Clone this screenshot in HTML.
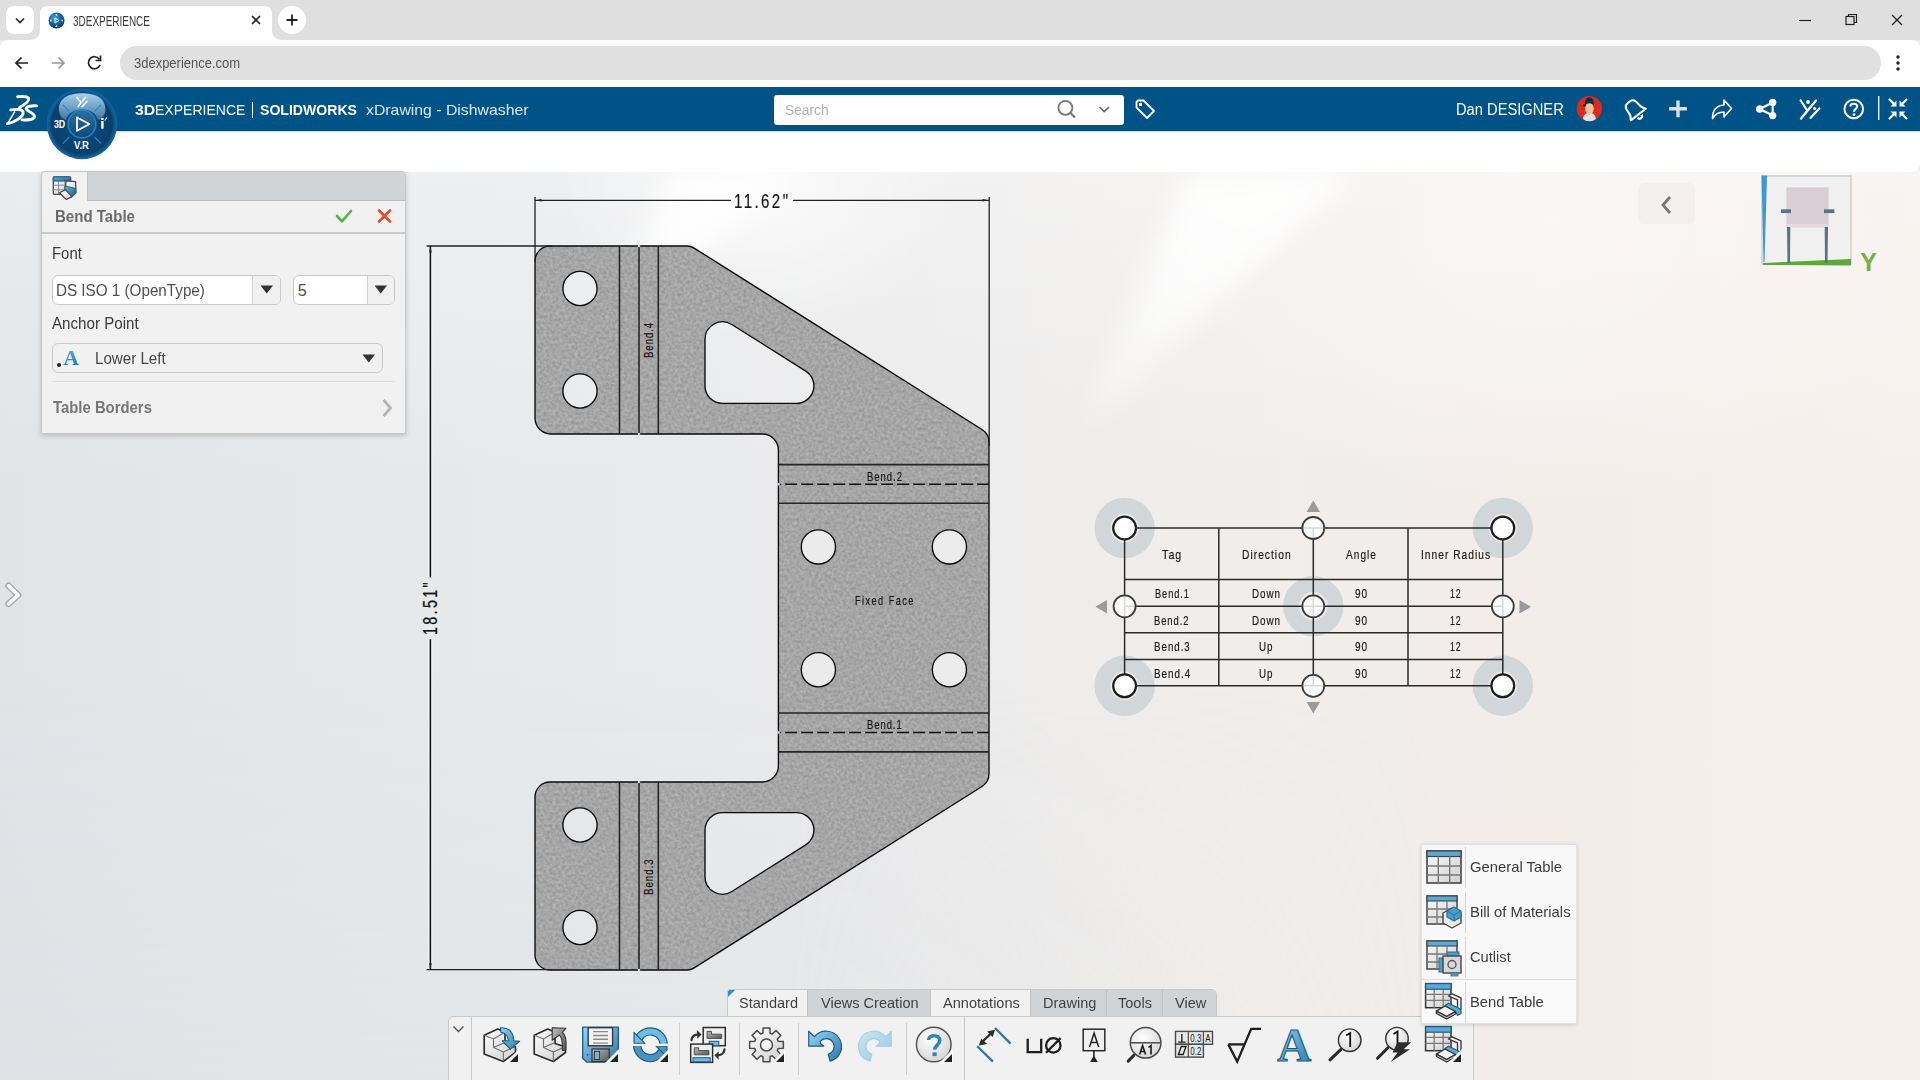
<!DOCTYPE html>
<html><head><meta charset="utf-8">
<style>
*{margin:0;padding:0;box-sizing:border-box}
html,body{width:1920px;height:1080px;overflow:hidden;font-family:"Liberation Sans", sans-serif;}
body{position:relative;background:#ececec}
.abs{position:absolute}
</style></head><body>

<div class="abs" style="left:0;top:170px;width:1920px;height:910px;overflow:hidden;background:linear-gradient(90deg,#e1e4e7 0%,#e6e8ea 20%,#ebebec 45%,#f0eeec 62%,#f3edea 82%,#f7efec 100%);">
 <div class="abs" style="left:0;top:0;width:1920px;height:910px;background:linear-gradient(180deg,rgba(255,255,255,0.3) 0%,rgba(255,255,255,0) 35%)"></div>
 <div class="abs" style="left:0;top:0;width:1920px;height:910px;background:linear-gradient(180deg,rgba(220,223,226,0) 55%,rgba(220,223,226,0.3) 100%);-webkit-mask-image:linear-gradient(90deg,#000 0%,#000 40%,transparent 75%)"></div>
 <div class="abs" style="left:0;top:0;width:1920px;height:600px;filter:blur(14px)">
  <div class="abs" style="left:0;top:0;width:1920px;height:600px;clip-path:polygon(685px -30px, 820px -30px, 595px 195px);background:linear-gradient(205deg,rgba(255,255,255,1) 15%,rgba(255,255,255,0.9) 40%,rgba(255,255,255,0) 80%)"></div>
  <div class="abs" style="left:0;top:0;width:1920px;height:600px;clip-path:polygon(1200px -30px, 1390px -30px, 1080px 265px);background:linear-gradient(210deg,rgba(255,255,255,1) 8%,rgba(255,255,255,0.85) 28%,rgba(255,255,255,0) 52%)"></div>
 </div>
 <div class="abs" style="left:560px;top:-150px;width:400px;height:320px;background:radial-gradient(closest-side,rgba(255,255,255,0.75),rgba(255,255,255,0) 100%)"></div>
 <div class="abs" style="left:1150px;top:-250px;width:800px;height:600px;background:radial-gradient(closest-side,rgba(255,255,255,0.4),rgba(255,255,255,0) 100%)"></div>
</div>

<div class="abs" style="left:0;top:0;width:1920px;height:40px;background:#dfdfdf"></div><div class="abs" style="left:6px;top:6px;width:28px;height:28px;border-radius:8px;background:#fff"></div><svg class="abs" style="left:6px;top:6px" width="28" height="28"><path d="M10 12.5 l4 4 l4 -4" fill="none" stroke="#222" stroke-width="1.6"/></svg><svg class="abs" style="left:28px;top:0" width="256" height="40"><path d="M0 40 Q12 40 12 30 L12 14 Q12 6 20 6 L236 6 Q244 6 244 14 L244 30 Q244 40 256 40 Z" fill="#fff"/></svg><svg class="abs" style="left:48px;top:12px" width="17" height="17" viewBox="0 0 17 17"><defs><radialGradient id="fav" cx="0.4" cy="0.35" r="0.7"><stop offset="0" stop-color="#4aa6e0"/><stop offset="0.6" stop-color="#0b5c9c"/><stop offset="1" stop-color="#063b66"/></radialGradient></defs><circle cx="8.5" cy="8.5" r="8" fill="url(#fav)"/><path d="M7 6 l4 2.5 l-4 2.5 z" fill="none" stroke="#fff" stroke-width="1"/><circle cx="8.5" cy="2.8" r="0.9" fill="#fff"/><circle cx="8.5" cy="14.2" r="0.9" fill="#fff"/><circle cx="2.8" cy="8.5" r="0.9" fill="#fff"/><circle cx="14.2" cy="8.5" r="0.9" fill="#fff"/></svg><div class="abs" style="left:73.00px;top:13.74px;font-size:14.24px;line-height:14.24px;color:#3c3c3c;white-space:nowrap;transform:scaleX(0.6998);transform-origin:0 0;letter-spacing:0.00px;">3DEXPERIENCE</div><svg class="abs" style="left:248px;top:12px" width="16" height="16"><path d="M4 4 L12 12 M12 4 L4 12" stroke="#222" stroke-width="1.6"/></svg><div class="abs" style="left:278px;top:6px;width:28px;height:28px;border-radius:14px;background:#fff"></div><svg class="abs" style="left:278px;top:6px" width="28" height="28"><path d="M14 8.5 V19.5 M8.5 14 H19.5" stroke="#222" stroke-width="1.8"/></svg><svg class="abs" style="left:1790px;top:8px" width="125" height="24"><path d="M9 12.5 H21" stroke="#222" stroke-width="1.2"/><rect x="56" y="8.5" width="8" height="8" fill="none" stroke="#222" stroke-width="1.2"/><path d="M58.5 8.5 V6.5 H66.5 V14.5 H64" fill="none" stroke="#222" stroke-width="1.2"/><path d="M102 7 L112 17 M112 7 L102 17" stroke="#222" stroke-width="1.3"/></svg><div class="abs" style="left:0;top:40px;width:1920px;height:47px;background:#fff;border-radius:8px 8px 0 0"></div><svg class="abs" style="left:0;top:46px" width="120" height="34"><path d="M28 17 H16 M21.5 11.5 L16 17 L21.5 22.5" fill="none" stroke="#222" stroke-width="1.7"/><path d="M52 17 H64 M58.5 11.5 L64 17 L58.5 22.5" fill="none" stroke="#9a9a9a" stroke-width="1.7"/><path d="M99.5 13.5 A6 6 0 1 0 100 19" fill="none" stroke="#222" stroke-width="1.7"/><path d="M100.5 9.5 V14.5 H95.5" fill="none" stroke="#222" stroke-width="1.7"/></svg><div class="abs" style="left:120px;top:46px;width:1761px;height:34px;border-radius:17px;background:#e0e0e0"></div><div class="abs" style="left:134.00px;top:56.05px;font-size:14.83px;line-height:14.83px;color:#555;white-space:nowrap;transform:scaleX(0.8750);transform-origin:0 0;letter-spacing:0.00px;">3dexperience.com</div><svg class="abs" style="left:1890px;top:50px" width="16" height="26"><circle cx="8" cy="7" r="1.7" fill="#222"/><circle cx="8" cy="13" r="1.7" fill="#222"/><circle cx="8" cy="19" r="1.7" fill="#222"/></svg><div class="abs" style="left:0;top:87px;width:1920px;height:44px;background:#005386;border-bottom:1px solid #004a7a"></div><div class="abs" style="left:0;top:131px;width:1920px;height:40.5px;background:#fff;border-radius:0 0 8px 0"></div><div class="abs" style="left:0;top:131px;width:1920px;height:2px;background:linear-gradient(180deg,rgba(0,80,130,0.25),rgba(0,80,130,0))"></div><svg class="abs" style="left:0;top:88px" width="50" height="42" viewBox="0 88 50 42">
<g fill="none" stroke="#fff" stroke-linecap="round" stroke-linejoin="round">
<path d="M17.6 96.7 C22 96.4 27 95.8 28.6 98.3 C29.8 100.8 24.5 104.5 19.6 107.6" stroke-width="2.9"/>
<path d="M10.8 109.9 C15 109.2 21.8 108.2 23 111.8 C24 116.5 15.5 122 7.5 123.6" stroke-width="2.9"/>
<path d="M7.5 123.6 L14.6 111.9" stroke-width="1.6"/>
<path d="M36.8 105.9 C32 105.6 26.2 106.2 26.2 108.6 C26.4 111.3 34.6 113.2 34.6 116.6 C34.6 119.6 27.5 120.2 22 119.9" stroke-width="2.9"/>
</g>
</svg><div class="abs" style="left:134.75px;top:102.18px;font-size:15.55px;line-height:15.55px;color:#fff;font-weight:bold;white-space:nowrap;transform:scaleX(1.0160);transform-origin:0 0;letter-spacing:0.00px;">3D</div><div class="abs" style="left:155.20px;top:102.18px;font-size:15.55px;line-height:15.55px;color:#fff;white-space:nowrap;transform:scaleX(0.9017);transform-origin:0 0;letter-spacing:0.00px;">EXPERIENCE</div><div class="abs" style="left:252px;top:101.5px;width:1.3px;height:16px;background:#fff"></div><div class="abs" style="left:260.00px;top:102.18px;font-size:15.55px;line-height:15.55px;color:#fff;font-weight:bold;white-space:nowrap;transform:scaleX(0.9054);transform-origin:0 0;letter-spacing:0.00px;">SOLIDWORKS</div><div class="abs" style="left:365.70px;top:102.18px;font-size:15.55px;line-height:15.55px;color:#dce8f0;white-space:nowrap;transform:scaleX(1.0169);transform-origin:0 0;letter-spacing:0.00px;">xDrawing - Dishwasher</div><svg class="abs" style="left:46px;top:87px" width="72" height="74" viewBox="0 0 72 74">
<defs>
<radialGradient id="cmpb" cx="0.5" cy="0.5" r="0.5"><stop offset="0" stop-color="#0d4e80"/><stop offset="0.86" stop-color="#0a3f6c"/><stop offset="0.93" stop-color="#0f5890"/><stop offset="1" stop-color="#1766a0"/></radialGradient>
<linearGradient id="cmpt" x1="0" y1="0" x2="0" y2="1"><stop offset="0" stop-color="#a6d0ee"/><stop offset="1" stop-color="#3f76a2"/></linearGradient>
<linearGradient id="cmpc" x1="0" y1="0" x2="0" y2="1"><stop offset="0" stop-color="#2f6e9e"/><stop offset="1" stop-color="#0a4a7c"/></linearGradient>
</defs>
<circle cx="36" cy="37" r="35.2" fill="url(#cmpb)"/>
<path d="M12.9 22 C12.9 11 23 6.2 36.2 6.2 C49.5 6.2 59.4 11 59.4 22 C59.4 28 56 31.5 52 33 C50 26 44 22.5 36 22.5 C28 22.5 22 26 20 33 C16 31.5 12.9 28 12.9 22 Z" fill="url(#cmpt)"/>
<path d="M16.7 17.7 L23.3 24.3 M55.3 17.7 L48.7 24.3 M16.7 56.6 L23.3 50 M55.3 56.6 L48.7 50" stroke="#1e8ad0" stroke-width="1.2"/>
<circle cx="36" cy="37" r="13.9" fill="url(#cmpc)" stroke="#1a88d0" stroke-width="1.5"/>
<path d="M31 30.5 L43.4 37 L31 43.8 Z" fill="none" stroke="#fff" stroke-width="1.8" stroke-linejoin="round"/>
<text x="13.6" y="40.9" font-size="11" font-weight="bold" fill="#fff" text-anchor="middle" font-family="Liberation Sans" transform="translate(13.6 0) scale(0.8 1) translate(-13.6 0)">3D</text>
<rect x="55.2" y="34" width="2.4" height="7.7" fill="#fff"/><rect x="55.2" y="31" width="2.4" height="2" fill="#fff"/>
<path d="M58.8 33.5 L60.9 30.5" stroke="#fff" stroke-width="1.3"/>
<g fill="none" stroke="#fff" stroke-width="1.7" stroke-linecap="round"><path d="M31 10.5 L35 15.5 L32.3 19.6 M36.5 14 L39.6 10.2 M36.2 19.6 L41 14.3"/></g>
<text x="35.5" y="62.2" font-size="11.2" font-weight="bold" fill="#fff" text-anchor="middle" font-family="Liberation Sans" transform="translate(35.5 0) scale(0.85 1) translate(-35.5 0)">V.R</text>
</svg><div class="abs" style="left:774px;top:94.5px;width:350px;height:30px;border-radius:3px;background:#fff"></div><div class="abs" style="left:785.20px;top:102.43px;font-size:15.55px;line-height:15.55px;color:#b0b0b0;white-space:nowrap;transform:scaleX(0.8848);transform-origin:0 0;letter-spacing:0.00px;">Search</div><svg class="abs" style="left:1050px;top:95px" width="70" height="30"><circle cx="15.4" cy="12.8" r="7" fill="none" stroke="#777" stroke-width="1.8"/><path d="M20.5 18 L25 22.5" stroke="#777" stroke-width="2.2"/><path d="M49.5 12 L54.2 16.5 L59 12" fill="none" stroke="#666" stroke-width="1.7"/></svg><svg class="abs" style="left:1133px;top:97px" width="26" height="26"><path d="M3.5 5 L3.5 10.5 L14 21 L21 14 L10.5 3.5 L5 3.5 Z" fill="none" stroke="#fff" stroke-width="1.8" stroke-linejoin="round"/><rect x="6" y="6" width="3" height="3" fill="#fff"/></svg><div class="abs" style="left:1456.00px;top:102.17px;font-size:15.63px;line-height:15.63px;color:#fff;white-space:nowrap;transform:scaleX(0.9401);transform-origin:0 0;letter-spacing:0.00px;">Dan DESIGNER</div><svg class="abs" style="left:1576px;top:95px" width="27" height="27" viewBox="0 0 27 27"><circle cx="13.4" cy="13.5" r="12.6" fill="#dc2a1e"/>
<ellipse cx="13.4" cy="13.6" rx="4.3" ry="6" fill="#eec39b"/>
<path d="M9 11 C8.5 6 10 2.3 13.4 2.3 C16.8 2.3 18.3 6 17.8 11 C16.5 9 15 8.3 13.4 8.3 C11.8 8.3 10.3 9 9 11 Z" fill="#0d2f4d"/>
<circle cx="8.3" cy="10.2" r="1.3" fill="#111"/>
<path d="M7 24 C7.2 20 9.5 18.5 12 18 L13.4 20 L14.8 18 C17.3 18.5 19.6 20 19.8 24 C18 25.6 15.8 26.2 13.4 26.2 C11 26.2 8.8 25.6 7 24 Z" fill="#e2e4e6"/>
</svg><svg class="abs" style="left:1600px;top:90px" width="320" height="40" viewBox="0 0 320 40">
<g transform="translate(34,19) rotate(-38)" fill="none" stroke="#fff" stroke-width="2" stroke-linejoin="round">
<path d="M-1.5 -8.5 C-5.5 -8.5 -6.5 -5 -6.5 -1 C-6.5 3 -7.5 5 -9.5 7 L9.5 7 C7.5 5 6.5 3 6.5 -1 C6.5 -5 5.5 -8.5 1.5 -8.5 Z"/>
<path d="M-2.5 9 A2.5 2.5 0 0 0 2.5 9" stroke-width="2.2"/>
</g>
<path d="M78 10.4 V27.2 M69.2 18.8 H86.9" stroke="#dedede" stroke-width="3.4"/>
<path d="M112.5 28.5 C112.5 20 117 15.5 124 15 V10 L131.5 18.5 L124 27 V22 C119 22 115 24 112.5 28.5 Z" fill="none" stroke="#fff" stroke-width="1.6" stroke-linejoin="round"/>
<g stroke="#fff" stroke-width="2.2"><path d="M159.7 19 L172.7 12.4 M159.7 19 L172.7 25.6 M172.7 12.4 V25.6"/></g>
<g fill="#fff"><circle cx="159.7" cy="19" r="3.7"/><circle cx="172.7" cy="12.4" r="3.6"/><circle cx="172.7" cy="25.6" r="3.6"/></g>
<g fill="none" stroke="#fff" stroke-width="2.3" stroke-linecap="round">
<path d="M200.7 10.5 L206.5 19.5 M216 10.5 L201 28.5"/>
<path d="M210.5 28 L219.3 18.5"/>
</g>
<circle cx="208" cy="12" r="1.9" fill="#fff"/><circle cx="214.6" cy="18.6" r="1.5" fill="#fff"/>
<circle cx="253.75" cy="19" r="9.3" fill="none" stroke="#fff" stroke-width="2"/>
<path d="M250.3 16.5 C250.3 12.8 257.3 12.8 257.3 16.3 C257.3 18.8 254 19 254 21.8" fill="none" stroke="#fff" stroke-width="2.1"/><circle cx="254" cy="24.6" r="1.4" fill="#fff"/>
<path d="M278.75 6 V30" stroke="#fff" stroke-width="1.3"/>
<g fill="none" stroke="#fff" stroke-width="2.2">
<path d="M289 9 L295 15 M307 9 L301 15 M289 29 L295 23 M307 29 L301 23"/>
</g>
<g fill="#fff"><path d="M296.5 16.5 L290.5 16.5 L296.5 10.5 Z"/><path d="M299.5 16.5 L305.5 16.5 L299.5 10.5 Z"/><path d="M296.5 21.5 L290.5 21.5 L296.5 27.5 Z"/><path d="M299.5 21.5 L305.5 21.5 L299.5 27.5 Z"/></g>
</svg>

<svg class="abs" style="left:0;top:0" width="1920" height="1080" viewBox="0 0 1920 1080">
 <defs>
  <filter id="noise" x="0" y="0" width="100%" height="100%" color-interpolation-filters="sRGB">
   <feTurbulence type="fractalNoise" baseFrequency="0.32" numOctaves="3" seed="7" result="t"/>
   <feColorMatrix type="matrix" in="t" result="n" values="1 0 0 0 0  1 0 0 0 0  1 0 0 0 0  0 0 0 0 0.2"/>
   <feComposite in="n" in2="SourceGraphic" operator="in" result="nn"/>
   <feMerge><feMergeNode in="SourceGraphic"/><feMergeNode in="nn"/></feMerge>
  </filter>
 </defs>
 <path d="M550 246 L687.33 246 A12 12 0 0 1 693.73 247.85 L982 429.49 A15 15 0 0 1 989 442.18 L989 773.82 A15 15 0 0 1 982 786.51 L693.73 968.15 A12 12 0 0 1 687.33 970 L550 970 A15 15 0 0 1 535 955 L535 797 A15 15 0 0 1 550 782 L762.4 782 A16 16 0 0 0 778.4 766 L778.4 450 A16 16 0 0 0 762.4 434 L551 434 A16 16 0 0 1 535 418 L535 261 A15 15 0 0 1 550 246 Z M731.83 324.51 L805.74 371.1 A17.5 17.5 0 0 1 796.41 403.4 L722.5 403.4 A17.5 17.5 0 0 1 705 385.9 L705 339.32 A17.5 17.5 0 0 1 731.83 324.51 Z M722.5 812.6 L796.41 812.6 A17.5 17.5 0 0 1 805.74 844.9 L731.83 891.49 A17.5 17.5 0 0 1 705 876.68 L705 830.1 A17.5 17.5 0 0 1 722.5 812.6 Z M562.90 288.50 a17.10 17.10 0 1 0 34.20 0 a17.10 17.10 0 1 0 -34.20 0 Z M562.90 391.00 a17.10 17.10 0 1 0 34.20 0 a17.10 17.10 0 1 0 -34.20 0 Z M562.90 825.00 a17.10 17.10 0 1 0 34.20 0 a17.10 17.10 0 1 0 -34.20 0 Z M562.90 927.50 a17.10 17.10 0 1 0 34.20 0 a17.10 17.10 0 1 0 -34.20 0 Z M801.30 546.90 a17.10 17.10 0 1 0 34.20 0 a17.10 17.10 0 1 0 -34.20 0 Z M932.30 546.90 a17.10 17.10 0 1 0 34.20 0 a17.10 17.10 0 1 0 -34.20 0 Z M801.30 669.70 a17.10 17.10 0 1 0 34.20 0 a17.10 17.10 0 1 0 -34.20 0 Z M932.30 669.70 a17.10 17.10 0 1 0 34.20 0 a17.10 17.10 0 1 0 -34.20 0 Z" fill="#afafaf" fill-rule="evenodd" filter="url(#noise)"/>
 <path d="M550 246 L687.33 246 A12 12 0 0 1 693.73 247.85 L982 429.49 A15 15 0 0 1 989 442.18 L989 773.82 A15 15 0 0 1 982 786.51 L693.73 968.15 A12 12 0 0 1 687.33 970 L550 970 A15 15 0 0 1 535 955 L535 797 A15 15 0 0 1 550 782 L762.4 782 A16 16 0 0 0 778.4 766 L778.4 450 A16 16 0 0 0 762.4 434 L551 434 A16 16 0 0 1 535 418 L535 261 A15 15 0 0 1 550 246 Z M731.83 324.51 L805.74 371.1 A17.5 17.5 0 0 1 796.41 403.4 L722.5 403.4 A17.5 17.5 0 0 1 705 385.9 L705 339.32 A17.5 17.5 0 0 1 731.83 324.51 Z M722.5 812.6 L796.41 812.6 A17.5 17.5 0 0 1 805.74 844.9 L731.83 891.49 A17.5 17.5 0 0 1 705 876.68 L705 830.1 A17.5 17.5 0 0 1 722.5 812.6 Z M562.90 288.50 a17.10 17.10 0 1 0 34.20 0 a17.10 17.10 0 1 0 -34.20 0 Z M562.90 391.00 a17.10 17.10 0 1 0 34.20 0 a17.10 17.10 0 1 0 -34.20 0 Z M562.90 825.00 a17.10 17.10 0 1 0 34.20 0 a17.10 17.10 0 1 0 -34.20 0 Z M562.90 927.50 a17.10 17.10 0 1 0 34.20 0 a17.10 17.10 0 1 0 -34.20 0 Z M801.30 546.90 a17.10 17.10 0 1 0 34.20 0 a17.10 17.10 0 1 0 -34.20 0 Z M932.30 546.90 a17.10 17.10 0 1 0 34.20 0 a17.10 17.10 0 1 0 -34.20 0 Z M801.30 669.70 a17.10 17.10 0 1 0 34.20 0 a17.10 17.10 0 1 0 -34.20 0 Z M932.30 669.70 a17.10 17.10 0 1 0 34.20 0 a17.10 17.10 0 1 0 -34.20 0 Z" fill="none" stroke="#0a0a0a" stroke-width="1.35"/>
 <g stroke="#262626" stroke-width="1.6">
  <line x1="619.5" y1="246" x2="619.5" y2="434"/><line x1="639" y1="246" x2="639" y2="434"/><line x1="658.3" y1="246" x2="658.3" y2="434"/>
  <line x1="619.5" y1="782" x2="619.5" y2="970"/><line x1="639" y1="782" x2="639" y2="970"/><line x1="658.3" y1="782" x2="658.3" y2="970"/>
  <line x1="778.4" y1="464.6" x2="989" y2="464.6"/><line x1="778.4" y1="503.3" x2="989" y2="503.3"/>
  <line x1="778.4" y1="713" x2="989" y2="713"/><line x1="778.4" y1="751.9" x2="989" y2="751.9"/>
 </g>
 <g stroke="#111" stroke-width="1.5" stroke-dasharray="12 4">
  <line x1="785.1" y1="484.3" x2="989" y2="484.3"/><line x1="785.1" y1="732.4" x2="989" y2="732.4"/>
 </g>
 <g fill="#111"><rect x="779.9" y="483.6" width="1.2" height="1.5"/><rect x="779.9" y="731.7" width="1.2" height="1.5"/></g>
 <g fill="#c9d3d8"><circle cx="639" cy="246" r="1.3"/><circle cx="639" cy="434" r="1.3"/><circle cx="639" cy="782" r="1.3"/><circle cx="639" cy="970" r="1.3"/><circle cx="778.4" cy="484.3" r="1.3"/><circle cx="778.4" cy="732.4" r="1.3"/></g>
 <!-- dimensions -->
 <g stroke="#202020" stroke-width="1.3" fill="none">
  <line x1="535" y1="197" x2="535" y2="262"/><line x1="989.2" y1="197" x2="989.2" y2="446"/>
  <line x1="535" y1="200.3" x2="731" y2="200.3"/><line x1="793.1" y1="200.3" x2="989" y2="200.3"/>
  <line x1="426.6" y1="246" x2="552" y2="246"/><line x1="426.6" y1="969.7" x2="552" y2="969.7"/>
 </g>
 <g stroke="#fff" stroke-width="3.6" opacity="0.8">
  <line x1="430.4" y1="250" x2="430.4" y2="577.4"/><line x1="430.4" y1="639.3" x2="430.4" y2="966"/>
 </g>
 <g stroke="#111" stroke-width="1.6">
  <line x1="430.4" y1="246" x2="430.4" y2="577.4"/><line x1="430.4" y1="639.3" x2="430.4" y2="969.7"/>
 </g>
 <g fill="#202020">
  <path d="M535.5 200.3 l6 -1.3 v2.6 z"/><path d="M988.5 200.3 l-6 -1.3 v2.6 z"/>
  <path d="M430.4 246.5 l-1.3 6 h2.6 z"/><path d="M430.4 969.2 l-1.3 -6 h2.6 z"/>
 </g>
</svg>
<div class="abs" style="left:734.00px;top:192.41px;font-size:19.48px;line-height:19.48px;color:#151515;white-space:nowrap;letter-spacing:3.12px;-webkit-text-stroke:0.2px #151515;transform:scaleX(0.7737);transform-origin:0 0">11.62"</div>
<div class="abs" style="left:421.27px;top:635.20px;font-size:19.77px;line-height:19.77px;color:#151515;white-space:nowrap;letter-spacing:3.16px;-webkit-text-stroke:0.2px #151515;transform:rotate(-90deg) scaleX(0.7275);transform-origin:0 0">18.51"</div>
<div class="abs" style="left:866.60px;top:470.20px;font-size:13.23px;line-height:13.23px;color:#151515;white-space:nowrap;letter-spacing:1.32px;-webkit-text-stroke:0.2px #151515;transform:scaleX(0.7211);transform-origin:0 0">Bend.2</div>
<div class="abs" style="left:867.00px;top:718.30px;font-size:13.23px;line-height:13.23px;color:#151515;white-space:nowrap;letter-spacing:1.32px;-webkit-text-stroke:0.2px #151515;transform:scaleX(0.7149);transform-origin:0 0">Bend.1</div>
<div class="abs" style="left:854.80px;top:594.85px;font-size:12.94px;line-height:12.94px;color:#151515;white-space:nowrap;letter-spacing:2.07px;-webkit-text-stroke:0.2px #151515;transform:scaleX(0.7057);transform-origin:0 0">Fixed Face</div>
<div class="abs" style="left:641.80px;top:358.00px;font-size:13.23px;line-height:13.23px;color:#151515;white-space:nowrap;letter-spacing:1.32px;-webkit-text-stroke:0.2px #151515;transform:rotate(-90deg) scaleX(0.7252);transform-origin:0 0">Bend.4</div>
<div class="abs" style="left:641.90px;top:894.50px;font-size:13.23px;line-height:13.23px;color:#151515;white-space:nowrap;letter-spacing:1.32px;-webkit-text-stroke:0.2px #151515;transform:rotate(-90deg) scaleX(0.7376);transform-origin:0 0">Bend.3</div>


<svg class="abs" style="left:0;top:0" width="1920" height="1080" viewBox="0 0 1920 1080">
 <circle cx="1124.6" cy="528" r="30.2" fill="#d3d6d8"/><circle cx="1124.6" cy="528" r="14.2" fill="#eceaea"/><circle cx="1502.8" cy="528" r="30.2" fill="#d3d6d8"/><circle cx="1502.8" cy="528" r="14.2" fill="#eceaea"/><circle cx="1124.6" cy="685.8" r="30.2" fill="#d3d6d8"/><circle cx="1124.6" cy="685.8" r="14.2" fill="#eceaea"/><circle cx="1502.8" cy="685.8" r="30.2" fill="#d3d6d8"/><circle cx="1502.8" cy="685.8" r="14.2" fill="#eceaea"/><circle cx="1313.3" cy="606.3" r="30.2" fill="#d3d6d8"/><circle cx="1313.3" cy="606.3" r="14.2" fill="#eceaea"/>
 <g stroke="#2a2a2a" stroke-width="1.5"><line x1="1124.6" y1="528" x2="1124.6" y2="685.8"/><line x1="1218.8" y1="528" x2="1218.8" y2="685.8"/><line x1="1313.3" y1="528" x2="1313.3" y2="685.8"/><line x1="1408" y1="528" x2="1408" y2="685.8"/><line x1="1502.8" y1="528" x2="1502.8" y2="685.8"/><line x1="1124.6" y1="528" x2="1502.8" y2="528"/><line x1="1124.6" y1="579.4" x2="1502.8" y2="579.4"/><line x1="1124.6" y1="606.3" x2="1502.8" y2="606.3"/><line x1="1124.6" y1="632.7" x2="1502.8" y2="632.7"/><line x1="1124.6" y1="659.4" x2="1502.8" y2="659.4"/><line x1="1124.6" y1="685.8" x2="1502.8" y2="685.8"/></g>
 <circle cx="1124.6" cy="528" r="11.4" fill="#fff" stroke="#1e1e1e" stroke-width="2.2"/><circle cx="1502.8" cy="528" r="11.4" fill="#fff" stroke="#1e1e1e" stroke-width="2.2"/><circle cx="1124.6" cy="685.8" r="11.4" fill="#fff" stroke="#1e1e1e" stroke-width="2.2"/><circle cx="1502.8" cy="685.8" r="11.4" fill="#fff" stroke="#1e1e1e" stroke-width="2.2"/><circle cx="1313.3" cy="528" r="11" fill="#fff" fill-opacity="0.82" stroke="#3c3c3c" stroke-width="1.8"/><circle cx="1313.3" cy="685.8" r="11" fill="#fff" fill-opacity="0.82" stroke="#3c3c3c" stroke-width="1.8"/><circle cx="1124.6" cy="606.3" r="11" fill="#fff" fill-opacity="0.82" stroke="#3c3c3c" stroke-width="1.8"/><circle cx="1502.8" cy="606.3" r="11" fill="#fff" fill-opacity="0.82" stroke="#3c3c3c" stroke-width="1.8"/><circle cx="1313.3" cy="606.3" r="11" fill="#fff" fill-opacity="0.82" stroke="#3c3c3c" stroke-width="1.8"/>
 <g fill="#9a9a9a">
  <path d="M1313.3 500.5 l6.7 11.5 h-13.4 z"/><path d="M1313.3 713.5 l6.7 -11.5 h-13.4 z"/>
  <path d="M1095.5 606.8 l11.5 -6.7 v13.4 z"/><path d="M1531 606.8 l-11.5 -6.7 v13.4 z"/>
 </g>
</svg>
<div class="abs" style="left:1162.05px;top:548.38px;font-size:13.37px;line-height:13.37px;color:#1a1a1a;white-space:nowrap;letter-spacing:1.34px;-webkit-text-stroke:0.2px #1a1a1a;transform:scaleX(0.7964);transform-origin:0 0">Tag</div><div class="abs" style="left:1241.75px;top:548.38px;font-size:13.37px;line-height:13.37px;color:#1a1a1a;white-space:nowrap;letter-spacing:1.34px;-webkit-text-stroke:0.2px #1a1a1a;transform:scaleX(0.7658);transform-origin:0 0">Direction</div><div class="abs" style="left:1345.70px;top:548.38px;font-size:13.37px;line-height:13.37px;color:#1a1a1a;white-space:nowrap;letter-spacing:1.34px;-webkit-text-stroke:0.2px #1a1a1a;transform:scaleX(0.7560);transform-origin:0 0">Angle</div><div class="abs" style="left:1420.90px;top:548.38px;font-size:13.37px;line-height:13.37px;color:#1a1a1a;white-space:nowrap;letter-spacing:1.34px;-webkit-text-stroke:0.2px #1a1a1a;transform:scaleX(0.7622);transform-origin:0 0">Inner Radius</div><div class="abs" style="left:1154.75px;top:587.92px;font-size:12.79px;line-height:12.79px;color:#1a1a1a;white-space:nowrap;letter-spacing:1.28px;-webkit-text-stroke:0.2px #1a1a1a;transform:scaleX(0.7223);transform-origin:0 0">Bend.1</div><div class="abs" style="left:1252.00px;top:587.92px;font-size:12.79px;line-height:12.79px;color:#1a1a1a;white-space:nowrap;letter-spacing:1.28px;-webkit-text-stroke:0.2px #1a1a1a;transform:scaleX(0.7690);transform-origin:0 0">Down</div><div class="abs" style="left:1354.55px;top:587.92px;font-size:12.79px;line-height:12.79px;color:#1a1a1a;white-space:nowrap;letter-spacing:1.28px;-webkit-text-stroke:0.2px #1a1a1a;transform:scaleX(0.7868);transform-origin:0 0">90</div><div class="abs" style="left:1450.10px;top:587.92px;font-size:12.79px;line-height:12.79px;color:#1a1a1a;white-space:nowrap;letter-spacing:1.28px;-webkit-text-stroke:0.2px #1a1a1a;transform:scaleX(0.6836);transform-origin:0 0">12</div><div class="abs" style="left:1154.45px;top:614.57px;font-size:12.79px;line-height:12.79px;color:#1a1a1a;white-space:nowrap;letter-spacing:1.28px;-webkit-text-stroke:0.2px #1a1a1a;transform:scaleX(0.7350);transform-origin:0 0">Bend.2</div><div class="abs" style="left:1252.00px;top:614.57px;font-size:12.79px;line-height:12.79px;color:#1a1a1a;white-space:nowrap;letter-spacing:1.28px;-webkit-text-stroke:0.2px #1a1a1a;transform:scaleX(0.7690);transform-origin:0 0">Down</div><div class="abs" style="left:1354.55px;top:614.57px;font-size:12.79px;line-height:12.79px;color:#1a1a1a;white-space:nowrap;letter-spacing:1.28px;-webkit-text-stroke:0.2px #1a1a1a;transform:scaleX(0.7868);transform-origin:0 0">90</div><div class="abs" style="left:1450.10px;top:614.57px;font-size:12.79px;line-height:12.79px;color:#1a1a1a;white-space:nowrap;letter-spacing:1.28px;-webkit-text-stroke:0.2px #1a1a1a;transform:scaleX(0.6836);transform-origin:0 0">12</div><div class="abs" style="left:1153.80px;top:641.12px;font-size:12.79px;line-height:12.79px;color:#1a1a1a;white-space:nowrap;letter-spacing:1.28px;-webkit-text-stroke:0.2px #1a1a1a;transform:scaleX(0.7627);transform-origin:0 0">Bend.3</div><div class="abs" style="left:1259.30px;top:641.12px;font-size:12.79px;line-height:12.79px;color:#1a1a1a;white-space:nowrap;letter-spacing:1.28px;-webkit-text-stroke:0.2px #1a1a1a;transform:scaleX(0.7657);transform-origin:0 0">Up</div><div class="abs" style="left:1354.55px;top:641.12px;font-size:12.79px;line-height:12.79px;color:#1a1a1a;white-space:nowrap;letter-spacing:1.28px;-webkit-text-stroke:0.2px #1a1a1a;transform:scaleX(0.7868);transform-origin:0 0">90</div><div class="abs" style="left:1450.10px;top:641.12px;font-size:12.79px;line-height:12.79px;color:#1a1a1a;white-space:nowrap;letter-spacing:1.28px;-webkit-text-stroke:0.2px #1a1a1a;transform:scaleX(0.6836);transform-origin:0 0">12</div><div class="abs" style="left:1153.55px;top:667.67px;font-size:12.79px;line-height:12.79px;color:#1a1a1a;white-space:nowrap;letter-spacing:1.28px;-webkit-text-stroke:0.2px #1a1a1a;transform:scaleX(0.7734);transform-origin:0 0">Bend.4</div><div class="abs" style="left:1259.30px;top:667.67px;font-size:12.79px;line-height:12.79px;color:#1a1a1a;white-space:nowrap;letter-spacing:1.28px;-webkit-text-stroke:0.2px #1a1a1a;transform:scaleX(0.7657);transform-origin:0 0">Up</div><div class="abs" style="left:1354.55px;top:667.67px;font-size:12.79px;line-height:12.79px;color:#1a1a1a;white-space:nowrap;letter-spacing:1.28px;-webkit-text-stroke:0.2px #1a1a1a;transform:scaleX(0.7868);transform-origin:0 0">90</div><div class="abs" style="left:1450.10px;top:667.67px;font-size:12.79px;line-height:12.79px;color:#1a1a1a;white-space:nowrap;letter-spacing:1.28px;-webkit-text-stroke:0.2px #1a1a1a;transform:scaleX(0.6836);transform-origin:0 0">12</div>

<div class="abs" style="left:41px;top:170.5px;width:365px;height:263px;background:#f1f1f1;border:1px solid #c6c6c6;border-radius:4px 4px 0 0;box-shadow:0 2px 5px rgba(0,0,0,0.18)"></div><div class="abs" style="left:87px;top:171.5px;width:318px;height:29px;background:#d1d4d6;border-bottom:1px solid #bcbcbc;border-top-right-radius:3px"></div><div class="abs" style="left:86.5px;top:171.5px;width:1px;height:29px;background:#c3c3c3"></div><svg class="abs" style="left:40px;top:170px" width="60" height="35" viewBox="40 170 60 35">
<defs><linearGradient id="pbg" x1="0" y1="0" x2="1" y2="1"><stop offset="0" stop-color="#fff"/><stop offset="1" stop-color="#d0d0d0"/></linearGradient>
<linearGradient id="pbb" x1="0" y1="0" x2="1" y2="1"><stop offset="0" stop-color="#6ab6dc"/><stop offset="1" stop-color="#1d5f8c"/></linearGradient></defs>
<rect x="53.3" y="177" width="17.3" height="17.4" rx="0.8" fill="url(#pbg)" stroke="#4a4a4a" stroke-width="1.3"/>
<path d="M58.5 181 V194.4 M64.9 181 V194.4 M53.3 185.2 H70.6 M53.3 189.8 H70.6" stroke="#8a8a8a" stroke-width="1"/>
<rect x="53.3" y="177" width="17.3" height="4.1" rx="0.8" fill="url(#pbb)" stroke="#1d5f8c" stroke-width="1"/>
<path d="M66 180.8 L75.6 181.6 L75.9 192.5 L71.5 196.8 L65.4 190.2 Z" fill="url(#pbg)" stroke="#444" stroke-width="1.2" stroke-linejoin="round"/>
<path d="M65 186 L75.8 188.5 L75.9 192.5 L71.5 196.8 L64.5 191.5 Z" fill="url(#pbb)" stroke="#1d5f8c" stroke-width="1" stroke-linejoin="round"/>
<path d="M59.4 192.7 L65.6 189.8 L71.8 196.6 L66.3 199.5 Z" fill="#eeeeee" stroke="#444" stroke-width="1.2" stroke-linejoin="round"/>
</svg><div class="abs" style="left:55.30px;top:208.81px;font-size:15.70px;line-height:15.70px;color:#6a6a6a;font-weight:bold;white-space:nowrap;transform:scaleX(0.9588);transform-origin:0 0;letter-spacing:0.00px;">Bend Table</div><svg class="abs" style="left:330px;top:204px" width="70" height="24"><path d="M7 12 L12 17.3 L21 7" fill="none" stroke="#4cb843" stroke-width="2.6" stroke-linecap="round" stroke-linejoin="round"/><path d="M49 6.5 L60 17.5 M60 6.5 L49 17.5" stroke="#e8472f" stroke-width="2.6" stroke-linecap="round"/></svg><div class="abs" style="left:42px;top:232px;width:363px;height:1.6px;background:#c9c9c9"></div><div class="abs" style="left:52.30px;top:246.17px;font-size:15.99px;line-height:15.99px;color:#3b3b3b;white-space:nowrap;transform:scaleX(0.9315);transform-origin:0 0;letter-spacing:0.00px;">Font</div><div class="abs" style="left:52px;top:274.5px;width:229px;height:30px;border:1px solid #c9c9c9;border-radius:6px;background:#fff;overflow:hidden"><div class="abs" style="left:199px;top:0;width:30px;height:30px;background:#f0f0f0;border-left:1px solid #cfcfcf"></div></div><div class="abs" style="left:55.60px;top:281.72px;font-size:16.28px;line-height:16.28px;color:#505050;white-space:nowrap;transform:scaleX(0.9357);transform-origin:0 0;letter-spacing:0.00px;">DS ISO 1 (OpenType)</div><svg class="abs" style="left:259px;top:284px" width="16" height="12"><path d="M1.5 1.5 H14 L7.75 9.5 Z" fill="#333"/></svg><div class="abs" style="left:293px;top:274.5px;width:101.5px;height:30px;border:1px solid #c9c9c9;border-radius:6px;background:#fff;overflow:hidden"><div class="abs" style="left:73px;top:0;width:30px;height:30px;background:#f0f0f0;border-left:1px solid #cfcfcf"></div></div><div class="abs" style="left:297.80px;top:281.64px;font-size:16.13px;line-height:16.13px;color:#505050;white-space:nowrap;transform:scaleX(1.0000);transform-origin:0 0;letter-spacing:0.00px;">5</div><svg class="abs" style="left:373px;top:284px" width="16" height="12"><path d="M1.5 1.5 H14 L7.75 9.5 Z" fill="#333"/></svg><div class="abs" style="left:52.00px;top:315.67px;font-size:15.99px;line-height:15.99px;color:#3b3b3b;white-space:nowrap;transform:scaleX(0.9471);transform-origin:0 0;letter-spacing:0.00px;">Anchor Point</div><div class="abs" style="left:52px;top:343px;width:330.5px;height:30px;border:1px solid #c9c9c9;border-radius:6px;background:#f1f1f1"></div><div class="abs" style="left:56.6px;top:363.2px;width:4.2px;height:4.2px;border-radius:50%;background:#222"></div><svg class="abs" style="left:60px;top:346px" width="22" height="22"><defs><linearGradient id="ag" x1="0" y1="0" x2="0" y2="1"><stop offset="0" stop-color="#5db3e3"/><stop offset="1" stop-color="#1f6c9f"/></linearGradient></defs><text x="11" y="19" font-size="21.5" font-weight="bold" text-anchor="middle" fill="url(#ag)" font-family="Liberation Serif">A</text></svg><div class="abs" style="left:94.90px;top:351.05px;font-size:16.72px;line-height:16.72px;color:#464646;white-space:nowrap;transform:scaleX(0.9058);transform-origin:0 0;letter-spacing:0.00px;">Lower Left</div><svg class="abs" style="left:361px;top:353px" width="16" height="12"><path d="M1.5 1.5 H14 L7.75 9.5 Z" fill="#333"/></svg><div class="abs" style="left:52px;top:381px;width:343px;height:1px;background:#dedede"></div><div class="abs" style="left:53.10px;top:398.92px;font-size:16.28px;line-height:16.28px;color:#767676;font-weight:bold;white-space:nowrap;transform:scaleX(0.9145);transform-origin:0 0;letter-spacing:0.00px;">Table Borders</div><svg class="abs" style="left:378px;top:397px" width="18" height="22"><path d="M5.5 3 L12.5 11 L5.5 19" fill="none" stroke="#b3b3b3" stroke-width="2.8"/></svg><svg class="abs" style="left:0;top:575px" width="30" height="40"><path d="M8.5 10.7 L18.1 20 L8.5 28.9" fill="none" stroke="#a2a4a6" stroke-width="6.4" stroke-linecap="round" stroke-linejoin="round"/><path d="M8.5 10.7 L18.1 20 L8.5 28.9" fill="none" stroke="#f6f7f8" stroke-width="3.8" stroke-linecap="round" stroke-linejoin="round"/></svg>
<div class="abs" style="left:1638.4px;top:183.4px;width:56.3px;height:40.6px;border-radius:6px;background:rgba(0,0,0,0.025)"></div><svg class="abs" style="left:1655px;top:193px" width="22" height="24"><path d="M15 4 L8 12 L15 20" fill="none" stroke="#777" stroke-width="2.8"/></svg><svg class="abs" style="left:1755px;top:170px" width="130" height="110">
<rect x="7" y="6" width="89" height="88" fill="#f0f0f0" stroke="#d2d2d2" stroke-width="1.6"/>
<path d="M6.5 5.5 H12 L9.5 92 L8.5 92 Z" fill="#3c9ad0"/>
<path d="M8 93 L96 89 V95.5 L8 95 Z" fill="#5fa83c"/>
<rect x="31.4" y="17.3" width="42.2" height="40" fill="#d8ced4"/>
<rect x="31.4" y="54" width="42.2" height="3" fill="#e3dbe0"/>
<path d="M32 57 H35.3 L35 93 H32.5 Z M69.7 57 H73 L72.5 93 H70 Z" fill="#587282"/>
<rect x="26" y="39.3" width="10" height="3.8" fill="#5a7585"/><rect x="69" y="39.3" width="10.4" height="3.8" fill="#5a7585"/>
<text x="113.5" y="101" font-size="25" font-weight="bold" text-anchor="middle" fill="#78b04a" font-family="Liberation Sans">Y</text>
</svg>
<div class="abs" style="left:727px;top:989.3px;width:490.4px;height:27px;border:1px solid #c8c8c8;border-bottom:none;border-radius:3px 6px 0 0;background:#d1d4d6;overflow:hidden"><div class="abs" style="left:-1.0px;top:0;width:81.39999999999998px;height:27px;background:#f1f1f1;border-right:1px solid #c2c2c2"></div><div class="abs" style="left:80.39999999999998px;top:0;width:122.39999999999998px;height:27px;background:#d1d4d6;border-right:1px solid #c2c2c2"></div><div class="abs" style="left:202.79999999999995px;top:0;width:99.89999999999998px;height:27px;background:#f1f1f1;border-right:1px solid #c2c2c2"></div><div class="abs" style="left:302.69999999999993px;top:0;width:75.90000000000009px;height:27px;background:#d1d4d6;border-right:1px solid #c2c2c2"></div><div class="abs" style="left:378.6px;top:0;width:56.200000000000045px;height:27px;background:#d1d4d6;border-right:1px solid #c2c2c2"></div><div class="abs" style="left:434.80000000000007px;top:0;width:54.0px;height:27px;background:#d1d4d6;border-right:1px solid #c2c2c2"></div><svg class="abs" style="left:0;top:0" width="8" height="8"><path d="M0 0 H7 L0 7 Z" fill="#2a8fd0"/></svg></div><div class="abs" style="left:738.77px;top:994.53px;font-size:15.55px;line-height:15.55px;color:#404040;white-space:nowrap;transform:scaleX(0.9356);transform-origin:0 0;letter-spacing:0.00px;">Standard</div><div class="abs" style="left:821.40px;top:994.53px;font-size:15.55px;line-height:15.55px;color:#404040;white-space:nowrap;transform:scaleX(0.9356);transform-origin:0 0;letter-spacing:0.00px;">Views Creation</div><div class="abs" style="left:942.92px;top:994.53px;font-size:15.55px;line-height:15.55px;color:#404040;white-space:nowrap;transform:scaleX(0.9356);transform-origin:0 0;letter-spacing:0.00px;">Annotations</div><div class="abs" style="left:1042.56px;top:994.53px;font-size:15.55px;line-height:15.55px;color:#404040;white-space:nowrap;transform:scaleX(0.9356);transform-origin:0 0;letter-spacing:0.00px;">Drawing</div><div class="abs" style="left:1118.32px;top:994.53px;font-size:15.55px;line-height:15.55px;color:#404040;white-space:nowrap;transform:scaleX(0.9356);transform-origin:0 0;letter-spacing:0.00px;">Tools</div><div class="abs" style="left:1174.76px;top:994.53px;font-size:15.55px;line-height:15.55px;color:#404040;white-space:nowrap;transform:scaleX(0.9356);transform-origin:0 0;letter-spacing:0.00px;">View</div><div class="abs" style="left:447.7px;top:1016.4px;width:1026px;height:70px;background:#f1f1f1;border:1px solid #c8c8c8;border-radius:6px 0 0 0"></div><div class="abs" style="left:471px;top:1017px;width:1px;height:63px;background:#c8c8c8"></div><svg class="abs" style="left:450px;top:1022px" width="18" height="14"><path d="M3.5 4.5 L8.5 9.5 L13.5 4.5" fill="none" stroke="#555" stroke-width="1.4"/></svg><div class="abs" style="left:679px;top:1023px;width:1px;height:52px;background:#cfcfcf"></div><div class="abs" style="left:738.5px;top:1023px;width:1px;height:52px;background:#cfcfcf"></div><div class="abs" style="left:797.6px;top:1023px;width:1px;height:52px;background:#cfcfcf"></div><div class="abs" style="left:905.9px;top:1023px;width:1px;height:52px;background:#cfcfcf"></div><div class="abs" style="left:964px;top:1017px;width:1px;height:63px;background:#c8c8c8"></div><svg class="abs" style="left:0;top:0" width="1920" height="1080" viewBox="0 0 1920 1080">
<defs>
<linearGradient id="cubeg" x1="0" y1="0" x2="1" y2="1"><stop offset="0" stop-color="#fdfdfd"/><stop offset="1" stop-color="#cfcfcf"/></linearGradient>
<linearGradient id="blueg" x1="0" y1="0" x2="1" y2="1"><stop offset="0" stop-color="#92d6f6"/><stop offset="1" stop-color="#2f76a3"/></linearGradient>
<linearGradient id="lblueg" x1="0" y1="0" x2="1" y2="1"><stop offset="0" stop-color="#c9e8f6"/><stop offset="1" stop-color="#9ac7dc"/></linearGradient>
<linearGradient id="grayg" x1="0" y1="0" x2="1" y2="1"><stop offset="0" stop-color="#bdbdbd"/><stop offset="1" stop-color="#555"/></linearGradient>
<radialGradient id="helpg" cx="0.4" cy="0.35" r="0.7"><stop offset="0" stop-color="#ffffff"/><stop offset="1" stop-color="#d4d4d4"/></radialGradient>
</defs>
<!-- icon1 block + blue arrow -->
<g transform="translate(478,1022)">
<path d="M6.2 13.2 L19.8 7 L27 10.2 V21.5 L37.5 25 V30.5 L25.3 39.5 L6.2 32 Z" fill="url(#cubeg)" stroke="#2e2e2e" stroke-width="1.7" stroke-linejoin="round"/>
<path d="M6.2 13.2 L15.5 17 L27 10.2 M15.5 17 V25.5 L25.3 30 V39.5 M25.3 30 L37.5 24.5 M15.5 25.5 L27 20.5" fill="none" stroke="#6a6a6a" stroke-width="1.1"/>
<path d="M22.5 5.8 C30.5 5 35.5 10 35.8 18.8 L41.7 19.3 L32.3 27.2 L24.2 18.8 L30.3 18.8 C30 13.5 27 10.2 22.8 10.2 Z" fill="url(#blueg)" stroke="#1c5a80" stroke-width="1.1" stroke-linejoin="round"/>
</g>
<!-- icon2 block + gray arrow -->
<g transform="translate(528,1022)">
<path d="M6.2 13.2 L19.8 7 L27 10.2 V21.5 L37.5 25 V30.5 L25.3 39.5 L6.2 32 Z" fill="url(#cubeg)" stroke="#2e2e2e" stroke-width="1.7" stroke-linejoin="round"/>
<path d="M6.2 13.2 L15.5 17 L27 10.2 M15.5 17 V25.5 L25.3 30 V39.5 M25.3 30 L37.5 24.5 M15.5 25.5 L27 20.5" fill="none" stroke="#6a6a6a" stroke-width="1.1"/>
<path d="M24.2 5.7 L38 6.25 L34.3 10.3 C38 13 39 18 37.6 28 L34.3 28.5 C35 20 33.5 15.5 31.5 13 L24.2 18.2 Z" fill="url(#grayg)" stroke="#333" stroke-width="1.1" stroke-linejoin="round"/>
</g>
<!-- icon3 floppy -->
<g transform="translate(578,1022)">
<path d="M4.7 5.2 H40.4 V40.1 H8.6 L4.7 36.2 Z" fill="url(#blueg)" stroke="#1c5a80" stroke-width="1.3" stroke-linejoin="round"/>
<rect x="10.2" y="5.7" width="24.4" height="18" fill="#f2f2f2" stroke="#3a3a3a" stroke-width="1.4"/>
<path d="M15.1 9.6 H30 M15.1 13.5 H30 M15.1 17.2 H30 M15.1 21.1 H30" stroke="#8a8a8a" stroke-width="1.4"/>
<rect x="14" y="27" width="17.25" height="12.6" fill="url(#grayg)" stroke="#333" stroke-width="1.2"/>
<rect x="16.4" y="29.4" width="5.2" height="8.1" fill="#6cb6de" stroke="#333" stroke-width="0.9"/>
<circle cx="9.6" cy="32.8" r="0.9" fill="#1c5a80"/>
</g>
<!-- icon4 refresh -->
<g transform="translate(578,1022)" fill="none">
<path d="M85.7 22 A13.3 13.3 0 0 0 60.9 16.15" stroke="#1c5a80" stroke-width="8.4"/>
<path d="M85.7 22 A13.3 13.3 0 0 0 60.9 16.15" stroke="#6cbce4" stroke-width="6"/>
<path d="M59.1 23.6 A13.3 13.3 0 0 0 83.9 29.45" stroke="#1c5a80" stroke-width="8.4"/>
<path d="M59.1 23.6 A13.3 13.3 0 0 0 83.9 29.45" stroke="#4a93c0" stroke-width="6"/>
<path d="M56 10.4 L56 21.4 L67 21.4 Z" fill="#6cbce4" stroke="#1c5a80" stroke-width="1.1" stroke-linejoin="round"/>
<path d="M89 35.2 L89 24.2 L78 24.2 Z" fill="#4a93c0" stroke="#1c5a80" stroke-width="1.1" stroke-linejoin="round"/>
<path d="M54 22.8 H91" stroke="#f1f1f1" stroke-width="2.2"/>
</g>
<!-- icon5 swap -->
<g transform="translate(686,1022)">
<rect x="17.2" y="5.5" width="22.1" height="18.2" fill="#efefef" stroke="#2e2e2e" stroke-width="1.5"/>
<path d="M21.1 9.4 H25.5 V12.2 H35.7 V16.4 H21.1 Z" fill="url(#grayg)" stroke="#444" stroke-width="0.9"/>
<rect x="23.2" y="19.3" width="9.6" height="4.4" fill="#6cbce4" stroke="#1c5a80" stroke-width="1"/>
<rect x="4.7" y="22.1" width="21.9" height="18.3" fill="#efefef" stroke="#2e2e2e" stroke-width="1.5"/>
<path d="M8.3 25.8 H12.7 V28.6 H22.9 V32.8 H8.3 Z" fill="url(#grayg)" stroke="#444" stroke-width="0.9"/>
<rect x="7" y="35.7" width="17.2" height="4.1" fill="#6cbce4" stroke="#1c5a80" stroke-width="1"/>
<path d="M5.5 18 C6 14 8.5 12.5 12.5 12.3" fill="none" stroke="#333" stroke-width="2.3" stroke-linecap="round"/>
<path d="M10.9 8 L15.6 12.5 L11.2 16.7 Z" fill="#333"/>
<path d="M38.5 27.3 C38.3 31 36 33.2 31.5 33.4" fill="none" stroke="#333" stroke-width="2.3" stroke-linecap="round"/>
<path d="M32.6 29.4 L28.4 33.3 L32.6 37.8 Z" fill="#333"/>
</g>
<!-- icon6 gear -->
<path d="M762.89 1033.24 L763.08 1028.04 L769.92 1028.04 L770.11 1033.24 A12.2 12.2 0 0 1 772.19 1034.11 L776 1030.56 L780.84 1035.4 L777.29 1039.21 A12.2 12.2 0 0 1 778.16 1041.29 L783.36 1041.48 L783.36 1048.32 L778.16 1048.51 A12.2 12.2 0 0 1 777.29 1050.59 L780.84 1054.4 L776 1059.24 L772.19 1055.69 A12.2 12.2 0 0 1 770.11 1056.56 L769.92 1061.76 L763.08 1061.76 L762.89 1056.56 A12.2 12.2 0 0 1 760.81 1055.69 L757 1059.24 L752.16 1054.4 L755.71 1050.59 A12.2 12.2 0 0 1 754.84 1048.51 L749.64 1048.32 L749.64 1041.48 L754.84 1041.29 A12.2 12.2 0 0 1 755.71 1039.21 L752.16 1035.4 L757 1030.56 L760.81 1034.11 A12.2 12.2 0 0 1 762.89 1033.24 Z" fill="url(#cubeg)" stroke="#4a4a4a" stroke-width="1.5" stroke-linejoin="round"/>
<circle cx="766.5" cy="1044.9" r="6" fill="#f4f4f4" stroke="#4a4a4a" stroke-width="1.5"/>
<!-- icon7 undo -->
<path d="M814.48 1036.67 A15.3 15.3 0 1 1 830.16 1061.28 L828.24 1054.13 A7.9 7.9 0 1 0 820.15 1041.42 L820.5 1043.5 L823.8 1046.2 L808.75 1046.2 L808.75 1031.2 L812.8 1035.2 Z" fill="url(#blueg)" stroke="#1c5a80" stroke-width="1.2" stroke-linejoin="round"/>
<!-- icon8 redo -->
<path d="M885.52 1036.67 A15.3 15.3 0 1 0 869.84 1061.28 L871.76 1054.13 A7.9 7.9 0 1 1 879.85 1041.42 L879.5 1043.5 L876.2 1046.2 L891.25 1046.2 L891.25 1031.2 L887.2 1035.2 Z" fill="url(#lblueg)" stroke="#a6cde0" stroke-width="1.2" stroke-linejoin="round"/>
<!-- icon9 help -->
<circle cx="933.75" cy="1044.5" r="17.3" fill="url(#helpg)" stroke="#555" stroke-width="1.5"/>
<path d="M928.6 1040 C928.6 1034.5 939.8 1034 939.8 1040.5 C939.8 1044.3 935 1045.5 934.6 1049.6" fill="none" stroke="#2f85b8" stroke-width="3.6"/>
<rect x="932.5" y="1052.4" width="4.2" height="3.8" fill="#2f85b8"/>
<!-- icon10 dimension -->
<g transform="translate(970,1022)">
<path d="M7.3 24.2 L22.9 39.6 M25 6 L40.6 21.6" stroke="#2a7aa6" stroke-width="2.3"/>
<path d="M11.5 20.5 L21.5 11" stroke="#2a2a2a" stroke-width="2.4"/>
<path d="M8.85 23.4 L11.2 16.7 L17.2 22.1 Z M25 7.8 L17.2 9.6 L22.7 15.1 Z" fill="#2a2a2a"/>
</g>
<!-- icon11 flat-bottom hole -->
<g transform="translate(970,1022)" fill="none" stroke="#1e1e1e" stroke-width="2.3">
<path d="M57.7 16.7 V30.1 H71.2 V16.7"/>
<circle cx="83.3" cy="23.4" r="7.2"/>
<path d="M76 30.7 L90.6 16.1"/>
</g>
<!-- icon12 note A -->
<g>
<rect x="1083.2" y="1029.2" width="21.6" height="21.5" fill="#efefef" stroke="#2a2a2a" stroke-width="1.5"/>
<path d="M1089.5 1047 L1094.1 1033.2 L1098.7 1047 M1091 1042.5 H1097.2" fill="none" stroke="#222" stroke-width="1.5"/>
<path d="M1093.9 1050.7 V1057" stroke="#222" stroke-width="1.6"/>
<path d="M1090.1 1062 L1093.9 1055.5 L1097.8 1062 Z" fill="#222"/>
</g>
<!-- icon13 A1 balloon -->
<g>
<circle cx="1145.6" cy="1042.8" r="15.3" fill="url(#helpg)" stroke="#4a4a4a" stroke-width="1.5"/>
<path d="M1130.4 1042.8 H1160.8" stroke="#4a4a4a" stroke-width="1.5"/>
<path d="M1139.6 1054.5 L1142.6 1045.6 L1145.6 1054.5 M1140.6 1051.5 H1144.6 M1148.5 1047.5 L1151 1045.5 V1054.5" fill="none" stroke="#1a1a1a" stroke-width="1.6"/>
<path d="M1128.2 1061.1 L1133.8 1055.4" stroke="#2a2a2a" stroke-width="3" stroke-linecap="round"/>
</g>
<!-- icon14 GD&T -->
<g>
<rect x="1175.5" y="1031.4" width="37" height="12.9" fill="#e6e6e6" stroke="#4a4a4a" stroke-width="1.4"/>
<rect x="1175.5" y="1044.3" width="27.9" height="12.8" fill="#e6e6e6" stroke="#4a4a4a" stroke-width="1.4"/>
<path d="M1188.3 1031.4 V1057.1 M1203.4 1031.4 V1044.3" stroke="#4a4a4a" stroke-width="1.2"/>
<path d="M1178.2 1042.2 H1185.5 M1181.85 1034 V1042.2" stroke="#1a1a1a" stroke-width="1.3"/>
<text x="1195.8" y="1042.3" font-size="10.5" text-anchor="middle" fill="#1a1a1a" font-family="Liberation Sans" transform="translate(1195.8 0) scale(0.75 1) translate(-1195.8 0)">0.3</text>
<text x="1207.9" y="1042.3" font-size="10" text-anchor="middle" fill="#1a1a1a" font-family="Liberation Sans" transform="translate(1207.9 0) scale(0.8 1) translate(-1207.9 0)">A</text>
<path d="M1178.4 1054.5 L1181.3 1046.5 H1186 L1183.1 1054.5 Z" fill="none" stroke="#1a1a1a" stroke-width="1.3"/>
<text x="1195.8" y="1055.2" font-size="10.5" text-anchor="middle" fill="#1a1a1a" font-family="Liberation Sans" transform="translate(1195.8 0) scale(0.75 1) translate(-1195.8 0)">0.2</text>
</g>
<!-- icon15 surface finish -->
<g transform="translate(1220,1022)" fill="none" stroke="#1e1e1e" stroke-width="2.3" stroke-linejoin="miter">
<path d="M8.3 22.4 H24.5"/>
<path d="M8.3 22.4 L17.2 39.6 L31.2 6.8 H41"/>
</g>
<!-- icon16 A -->
<text x="1294.2" y="1061" font-size="47" font-weight="bold" text-anchor="middle" fill="url(#blueg)" stroke="#1a5a82" stroke-width="1.1" font-family="Liberation Serif">A</text>
<!-- icon17 balloon 1 -->
<g>
<circle cx="1349.7" cy="1040.2" r="11.3" fill="url(#helpg)" stroke="#333" stroke-width="1.4"/>
<path d="M1346.2 1035.5 L1350.2 1033 V1047" fill="none" stroke="#111" stroke-width="1.8"/>
<path d="M1330 1059.8 L1340.8 1049.6" stroke="#2a2a2a" stroke-width="3" stroke-linecap="round"/>
</g>
<!-- icon18 auto balloon -->
<g>
<circle cx="1397" cy="1038.7" r="11.3" fill="url(#helpg)" stroke="#333" stroke-width="1.4"/>
<path d="M1393.5 1034 L1397.5 1031.5 V1045.5" fill="none" stroke="#111" stroke-width="1.8"/>
<path d="M1377.5 1058.3 L1388.2 1047.5" stroke="#2a2a2a" stroke-width="3" stroke-linecap="round"/>
<path d="M1397.5 1042.3 L1411.2 1042.3 L1403.6 1049.3 L1410 1049.3 L1390.8 1062 L1397.6 1052.4 L1392.6 1052.4 Z" fill="#2b2b2b"/>
</g>
</svg><svg class="abs" style="left:1424px;top:1025px" width="40" height="40" viewBox="0 0 40 40">
<defs><linearGradient id="tgtb" x1="0" y1="0" x2="1" y2="1"><stop offset="0" stop-color="#fafafa"/><stop offset="1" stop-color="#d0d0d0"/></linearGradient></defs>
<rect x="1.6" y="1.6" width="25.4" height="24.1" fill="url(#tgtb)" stroke="#333" stroke-width="1.5"/>
<path d="M10.2 7.2 V25.7 M19.2 7.2 V25.7 M1.6 12.4 H27 M1.6 18.4 H27" stroke="#7a7a7a" stroke-width="1.3"/>
<rect x="1.6" y="1.6" width="25.4" height="5.6" fill="#5aaad6" stroke="#1c5a80" stroke-width="1.2"/>
<path d="M24.5 14 L28 11.8 L37 15.8 V27.5 L33.5 29.5 V17.8 Z" fill="#f2f2f2" stroke="#333" stroke-width="1.3" stroke-linejoin="round"/>
<path d="M21 23.5 L24.5 21.2 L33.5 25.5 C35.5 26.5 37 27.5 37 29 L37 31.5 L33.5 33.5 C33.5 31.5 32 30.5 30 29.5 Z" fill="#5aaad6" stroke="#1c5a80" stroke-width="1.1" stroke-linejoin="round"/>
<path d="M12.4 29.1 L21 24 L31.5 29.5 L22.7 34.5 Z" fill="#f3f3f3" stroke="#333" stroke-width="1.3" stroke-linejoin="round"/>
<path d="M12.4 29.1 V31.5 L22.7 37 L31.5 32 V29.5 L22.7 34.5 Z" fill="#c4c4c4" stroke="#333" stroke-width="1.3" stroke-linejoin="round"/>
</svg><svg class="abs" style="left:505.1px;top:1049.1px" width="14" height="14"><path d="M0 14 L14 0 V14 Z" fill="#fafafa"/><path d="M5 13 L13 5 V13 Z" fill="#222"/></svg><svg class="abs" style="left:605.1px;top:1049.1px" width="14" height="14"><path d="M0 14 L14 0 V14 Z" fill="#fafafa"/><path d="M5 13 L13 5 V13 Z" fill="#222"/></svg><svg class="abs" style="left:654.8px;top:1048.8px" width="14" height="14"><path d="M0 14 L14 0 V14 Z" fill="#fafafa"/><path d="M5 13 L13 5 V13 Z" fill="#222"/></svg><svg class="abs" style="left:770.9px;top:1049.1px" width="14" height="14"><path d="M0 14 L14 0 V14 Z" fill="#fafafa"/><path d="M5 13 L13 5 V13 Z" fill="#222"/></svg><svg class="abs" style="left:939px;top:1049px" width="14" height="14"><path d="M0 14 L14 0 V14 Z" fill="#fafafa"/><path d="M5 13 L13 5 V13 Z" fill="#222"/></svg><svg class="abs" style="left:1448px;top:1049px" width="14" height="14"><path d="M0 14 L14 0 V14 Z" fill="#fafafa"/><path d="M5 13 L13 5 V13 Z" fill="#222"/></svg>
<div class="abs" style="left:1421px;top:844px;width:156px;height:180px;background:#f8f8f8;border:1px solid #e2e2e2;box-shadow:0 1px 4px rgba(0,0,0,0.15)"></div><div class="abs" style="left:1422px;top:979px;width:154px;height:44px;background:#fafafa;border-top:1px solid #dcdcdc"></div><div class="abs" style="left:1465px;top:847px;width:1px;height:41px;background:#d6d6d6"></div><div class="abs" style="left:1465px;top:892px;width:1px;height:41px;background:#d6d6d6"></div><div class="abs" style="left:1465px;top:937px;width:1px;height:41px;background:#d6d6d6"></div><div class="abs" style="left:1465px;top:982px;width:1px;height:41px;background:#d6d6d6"></div><svg class="abs" style="left:1424px;top:847px" width="40" height="40" viewBox="0 0 40 40">
<defs><linearGradient id="tgfg" x1="0" y1="0" x2="1" y2="1"><stop offset="0" stop-color="#fafafa"/><stop offset="1" stop-color="#d0d0d0"/></linearGradient></defs>
<rect x="3" y="4" width="34" height="32" fill="url(#tgfg)" stroke="#444" stroke-width="1.6"/>
<rect x="3" y="4" width="34" height="5.5" fill="#5aaad6" stroke="#444" stroke-width="1.2"/>
<path d="M3 19 H37 M3 28 H37 M14.3 9.5 V36 M25.7 9.5 V36" stroke="#777" stroke-width="1.4"/>
</svg><svg class="abs" style="left:1424px;top:892px" width="40" height="40" viewBox="0 0 40 40">
<defs><linearGradient id="tgfm" x1="0" y1="0" x2="1" y2="1"><stop offset="0" stop-color="#fafafa"/><stop offset="1" stop-color="#d0d0d0"/></linearGradient></defs>
<rect x="3" y="4" width="30" height="28" fill="url(#tgfm)" stroke="#444" stroke-width="1.5"/>
<rect x="3" y="4" width="30" height="5" fill="#5aaad6" stroke="#444" stroke-width="1.1"/>
<path d="M3 17 H33 M3 25 H33 M13 9 V32 M23 9 V32" stroke="#777" stroke-width="1.3"/>
<path d="M19 21 L28 16 L37 21 V31 L28 36 L19 31 Z" fill="#eaeaea" stroke="#444" stroke-width="1.4" stroke-linejoin="round"/>
<path d="M23 19 L30 15 L37 19 V25 L30 29 L23 25 Z" fill="#4b9cd0" stroke="#2d6f9c" stroke-width="1.2" stroke-linejoin="round"/>
<path d="M23 19 L30 23 L37 19 M30 23 V29" fill="none" stroke="#2d6f9c" stroke-width="1"/>
</svg><svg class="abs" style="left:1424px;top:937px" width="40" height="40" viewBox="0 0 40 40">
<defs><linearGradient id="tgfc" x1="0" y1="0" x2="1" y2="1"><stop offset="0" stop-color="#fafafa"/><stop offset="1" stop-color="#d0d0d0"/></linearGradient></defs>
<rect x="3" y="4" width="30" height="28" fill="url(#tgfc)" stroke="#444" stroke-width="1.5"/>
<rect x="3" y="4" width="30" height="5" fill="#5aaad6" stroke="#444" stroke-width="1.1"/>
<path d="M3 17 H33 M3 25 H33 M13 9 V32 M23 9 V32" stroke="#777" stroke-width="1.3"/>
<rect x="15" y="21" width="6" height="14" fill="#4b9cd0" stroke="#2d6f9c" stroke-width="1"/>
<rect x="23" y="15" width="12" height="6" fill="#4b9cd0" stroke="#2d6f9c" stroke-width="1"/>
<rect x="19" y="19" width="18" height="17" fill="#d8d8d8" stroke="#444" stroke-width="1.4"/>
<circle cx="28" cy="27.5" r="4" fill="none" stroke="#555" stroke-width="1.3"/>
<rect x="27" y="36" width="7" height="3" fill="#4b9cd0" stroke="#2d6f9c" stroke-width="0.8"/>
</svg><svg class="abs" style="left:1424px;top:982px" width="40" height="40" viewBox="0 0 40 40">
<defs><linearGradient id="tgfb" x1="0" y1="0" x2="1" y2="1"><stop offset="0" stop-color="#fafafa"/><stop offset="1" stop-color="#d0d0d0"/></linearGradient></defs>
<rect x="1.6" y="1.6" width="25.4" height="24.1" fill="url(#tgfb)" stroke="#333" stroke-width="1.5"/>
<path d="M10.2 7.2 V25.7 M19.2 7.2 V25.7 M1.6 12.4 H27 M1.6 18.4 H27" stroke="#7a7a7a" stroke-width="1.3"/>
<rect x="1.6" y="1.6" width="25.4" height="5.6" fill="#5aaad6" stroke="#1c5a80" stroke-width="1.2"/>
<path d="M24.5 14 L28 11.8 L37 15.8 V27.5 L33.5 29.5 V17.8 Z" fill="#f2f2f2" stroke="#333" stroke-width="1.3" stroke-linejoin="round"/>
<path d="M21 23.5 L24.5 21.2 L33.5 25.5 C35.5 26.5 37 27.5 37 29 L37 31.5 L33.5 33.5 C33.5 31.5 32 30.5 30 29.5 Z" fill="#5aaad6" stroke="#1c5a80" stroke-width="1.1" stroke-linejoin="round"/>
<path d="M12.4 29.1 L21 24 L31.5 29.5 L22.7 34.5 Z" fill="#f3f3f3" stroke="#333" stroke-width="1.3" stroke-linejoin="round"/>
<path d="M12.4 29.1 V31.5 L22.7 37 L31.5 32 V29.5 L22.7 34.5 Z" fill="#c4c4c4" stroke="#333" stroke-width="1.3" stroke-linejoin="round"/>
</svg><div class="abs" style="left:1470.40px;top:858.63px;font-size:15.55px;line-height:15.55px;color:#3b3b3b;white-space:nowrap;transform:scaleX(0.9529);transform-origin:0 0;letter-spacing:0.00px;">General Table</div><div class="abs" style="left:1470.40px;top:903.73px;font-size:15.55px;line-height:15.55px;color:#3b3b3b;white-space:nowrap;transform:scaleX(0.9541);transform-origin:0 0;letter-spacing:0.00px;">Bill of Materials</div><div class="abs" style="left:1470.40px;top:949.03px;font-size:15.55px;line-height:15.55px;color:#3b3b3b;white-space:nowrap;transform:scaleX(0.9442);transform-origin:0 0;letter-spacing:0.00px;">Cutlist</div><div class="abs" style="left:1470.40px;top:993.73px;font-size:15.55px;line-height:15.55px;color:#3b3b3b;white-space:nowrap;transform:scaleX(0.9517);transform-origin:0 0;letter-spacing:0.00px;">Bend Table</div>
</body></html>
